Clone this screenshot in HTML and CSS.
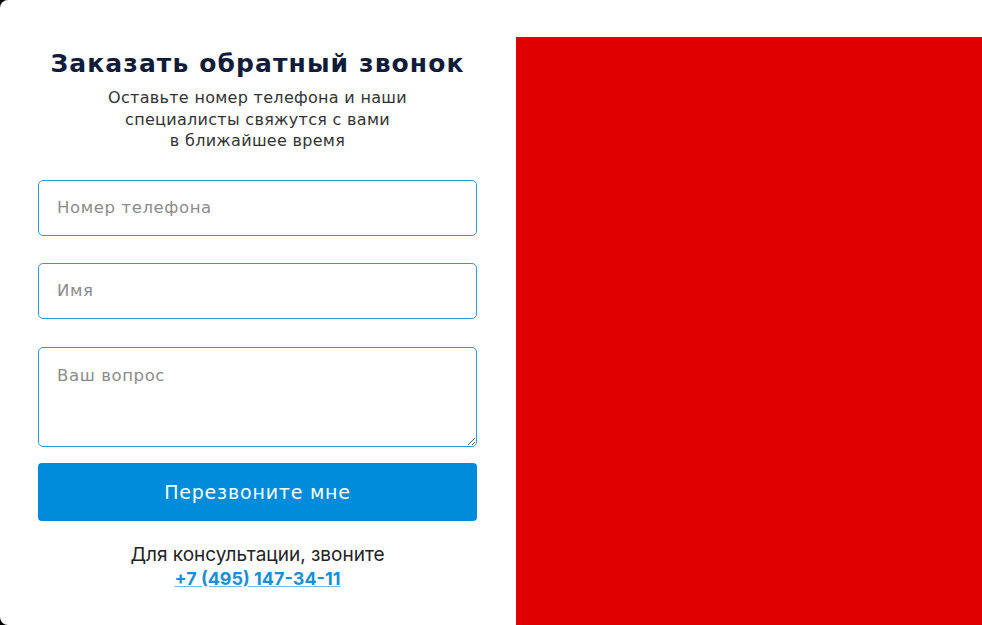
FILE: index.html
```html
<!DOCTYPE html>
<html lang="ru">
<head>
<meta charset="utf-8">
<link rel="stylesheet" href="styles.css">
</head>
<body>
<div class="modal">
  <div class="form-col">
    <h1 class="title">Заказать обратный звонок</h1>
    <p class="subtitle">Оставьте номер телефона и наши<br>специалисты свяжутся с вами<br>в ближайшее время</p>
    <form class="form">
      <input class="field" type="text" placeholder="Номер телефона">
      <input class="field" type="text" placeholder="Имя">
      <textarea class="field area" placeholder="Ваш вопрос"></textarea>
      <button class="btn" type="button">Перезвоните мне</button>
    </form>
    <div class="contact">
      <div class="contact-text">Для консультации, звоните</div>
      <a class="phone" href="#">+7 (495) 147-34-11</a>
    </div>
  </div>
  <div class="media"></div>
</div>
</body>
</html>
```
FILE: styles.css
```css
html, body {
  margin: 0;
  padding: 0;
  height: 100%;
  background: #000;
}
.modal {
  display: flex;
  height: 625px;
  background: #fff;
  border-radius: 8px 0 0 8px;
  overflow: hidden;
}
.form-col {
  width: 439px;
  padding: 0 39px 0 38px;
  display: flex;
  flex-direction: column;
  align-items: stretch;
}
.title {
  margin: 48px 0 0;
  font-family: "DejaVu Sans", Inter, sans-serif;
  font-weight: 700;
  font-size: 25px;
  line-height: 32px;
  letter-spacing: 1.1px;
  color: #0f1c3a;
  text-align: center;
}
.subtitle {
  margin: 7px 0 0;
  font-family: "DejaVu Sans", Inter, sans-serif;
  font-size: 16px;
  line-height: 21.5px;
  letter-spacing: 0.3px;
  color: #333;
  text-align: center;
}
.form {
  margin-top: 28px;
  display: flex;
  flex-direction: column;
}
.field {
  box-sizing: border-box;
  width: 100%;
  height: 56px;
  margin: 0 0 27px;
  padding: 0 18px;
  border: 1px solid #2d9ad4;
  border-radius: 5px;
  font-family: "DejaVu Sans", Inter, sans-serif;
  font-size: 16.5px;
  letter-spacing: 0.6px;
  color: #333;
  background: #fff;
  outline: none;
}
.field::placeholder {
  color: #8c8c8c;
}
.area {
  height: 100px;
  margin-top: 1px;
  padding-top: 18px;
  margin-bottom: 16px;
  resize: vertical;
}
.btn {
  height: 58px;
  border: none;
  border-radius: 4px;
  background: #008bdb;
  color: #fff;
  font-family: "DejaVu Sans", Inter, sans-serif;
  font-size: 19px;
  letter-spacing: 0.8px;
  font-weight: 400;
  cursor: pointer;
}
.contact {
  margin-top: 22px;
  text-align: center;
  font-family: Inter, "Noto Sans", sans-serif;
}
.contact-text {
  font-size: 19px;
  line-height: 24px;
  color: #222;
}
.phone {
  font-size: 18px;
  line-height: 24px;
  font-weight: 700;
  color: #1a8fd6;
  text-decoration: underline;
  text-decoration-color: #7ab8e6;
}
.media {
  flex: 1;
  margin-top: 37px;
  background: #e00000;
}
```
